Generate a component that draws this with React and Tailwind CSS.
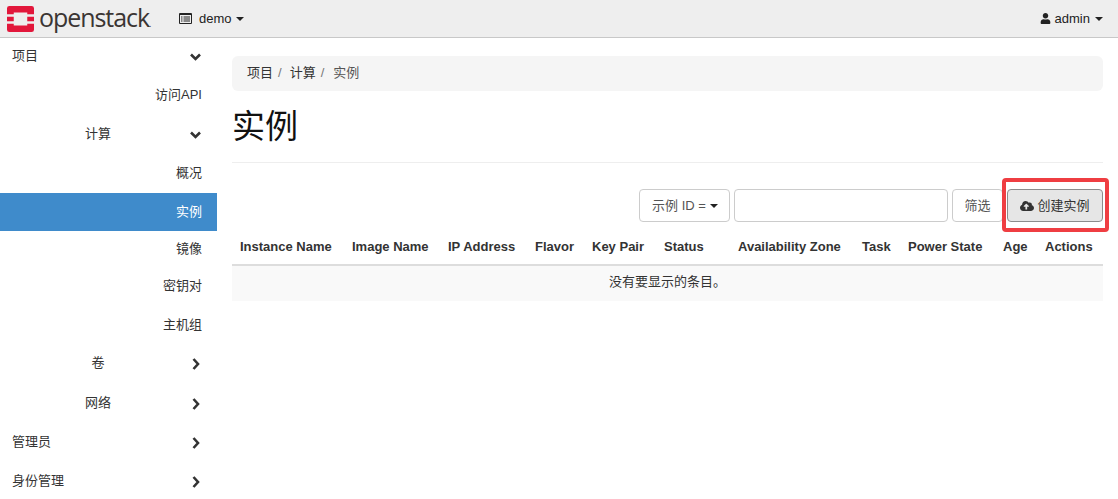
import React from "react";
import { FaCloudUploadAlt, FaUser } from "react-icons/fa";

const FONT = '"Liberation Sans", "Noto Sans CJK SC", sans-serif';

function Caret({ className = "" }) {
  return <span className={`inline-block w-0 h-0 border-x-4 border-x-transparent border-t-4 border-t-current ${className}`} />;
}

function Logo() {
  return (
    <svg width="27" height="26" viewBox="0 0 28 28" preserveAspectRatio="none" className="shrink-0">
      <path fill="#e2173b" fillRule="evenodd" d="M2.5 0H25.5A2.5 2.5 0 0 1 28 2.5V9H21V7H7V9H0V2.500A2.5 2.5 0 0 1 2.500 0ZM0 11.500H7V16.500H0ZM21 11.500H28V16.500H21ZM0 19H7V21H21V19H28V25.500A2.500 2.500 0 0 1 25.500 28H2.500A2.500 2.500 0 0 1 0 25.500Z" />
    </svg>
  );
}

function Chevron({ dir }) {
  return dir === "down" ? (
    <svg width="11" height="8" viewBox="0 0 11 8" className="mt-[2px]">
      <polyline points="1,1.500 5.500,6 10,1.500" fill="none" stroke="#333" strokeWidth="2.600" />
    </svg>
  ) : (
    <svg width="8" height="12" viewBox="0 0 8 12" className="mt-[2px]">
      <polyline points="1.500,1 6,6 1.500,11" fill="none" stroke="#333" strokeWidth="2.600" />
    </svg>
  );
}

function Row({ label, sub, icon, active, cls }) {
  return (
    <div className={`${cls} flex items-center pr-[15px] ${active ? "bg-[#3f8bcb] text-white" : "text-[#333]"}`}>
      {icon ? (
        <>
          <span className={`flex-1 ${sub ? "text-center pl-[6px]" : "pl-3"}`}>{label}</span>
          <span className="w-[13px] flex justify-center ml-[-1px]">
            <Chevron dir={icon} />
          </span>
        </>
      ) : (
        <span className="flex-1 text-right">{label}</span>
      )}
    </div>
  );
}

const cols = [
  ["Instance Name", "w-[112px]"],
  ["Image Name", "w-[96px]"],
  ["IP Address", "w-[87px]"],
  ["Flavor", "w-[57px]"],
  ["Key Pair", "w-[72px]"],
  ["Status", "w-[74px]"],
  ["Availability Zone", "w-[124px]"],
  ["Task", "w-[46px]"],
  ["Power State", "w-[95px]"],
  ["Age", "w-[42px]"],
  ["Actions", "w-[66px]"],
];

export default function App() {
  return (
    <div className="h-[499px] w-[1118px] overflow-hidden bg-white text-[13px] text-[#333] flex flex-col" style={{ fontFamily: FONT }}>
      <header className="h-[38px] shrink-0 bg-[#eeeeee] border-b border-[#c8c8c8] flex items-center">
        <div className="pl-[7px] flex items-center w-[179px]">
          <Logo />
          <span className="ml-[5px] text-[25px] leading-none tracking-[-1.05px] font-medium text-[#3b3533] pb-[2px]" style={{ fontFamily: '"Open Sans", sans-serif' }}>
            openstack<span className="text-[9px]">.</span>
          </span>
        </div>
        <div className="flex items-center text-[#222]">
          <svg width="13" height="11" viewBox="0 0 13 11" className="mr-[7px]">
            <path fill="#222" fillRule="evenodd" d="M1 0H12A1 1 0 0 1 13 1V10A1 1 0 0 1 12 11H1A1 1 0 0 1 0 10V1A1 1 0 0 1 1 0ZM1 2V10H12V2ZM2 3.500H3.500V4.500H2ZM4.500 3.500H11V4.500H4.500ZM2 5.500H3.500V6.500H2ZM4.500 5.500H11V6.500H4.500ZM2 7.500H3.500V8.500H2ZM4.500 7.500H11V8.500H4.500Z" />
          </svg>
          demo
          <Caret className="ml-[4px]" />
        </div>
        <div className="ml-auto pr-[15px] flex items-center text-[#222]">
          <FaUser size={11} className="mr-[4px]" />
          admin
          <Caret className="ml-[5px]" />
        </div>
      </header>
      <div className="flex flex-1 min-h-0">
        <aside className="w-[217px] shrink-0">
          <Row cls="h-[38px] pb-[3px]" label="项目" icon="down" />
          <Row cls="h-[39px] pb-[1px]" label="访问API" />
          <Row cls="h-[39px] pb-[1px]" label="计算" sub icon="down" />
          <Row cls="h-[39px] pb-[1px]" label="概况" />
          <Row cls="h-[38px] pb-[1px]" label="实例" active />
          <Row cls="h-[38px] pb-[3px]" label="镜像" />
          <Row cls="h-[38px] pb-[5px]" label="密钥对" />
          <Row cls="h-[39px] pb-[3px]" label="主机组" />
          <Row cls="h-[38px] pb-[5px]" label="卷" sub icon="right" />
          <Row cls="h-[39px] pb-[2px]" label="网络" sub icon="right" />
          <Row cls="h-[39px] pb-[2px]" label="管理员" icon="right" />
          <Row cls="h-[39px] pb-[2px]" label="身份管理" icon="right" />
        </aside>
        <main className="flex-1 pl-[15px] pr-[15px] pt-[18px] min-w-0">
          <nav className="h-[35px] bg-[#f5f5f5] rounded-md flex items-center px-[15px] pb-[2px]">
            <span>项目</span>
            <span className="text-[#777] px-[5px]">/</span>
            <span className="ml-[3px]">计算</span>
            <span className="text-[#777] px-[5px]">/</span>
            <span className="ml-[4px] text-[#555]">实例</span>
          </nav>
          <h1 className="mt-[18px] h-[53px] text-[33px] leading-[36px] text-[#111] font-normal">实例</h1>
          <hr className="border-t border-[#eeeeee]" />
          <div className="mt-[26px] flex justify-end items-center">
            <button className="h-[33px] w-[91px] pl-[1px] border border-[#ccc] rounded text-[#555] flex items-center justify-center">
              示例 ID =<Caret className="ml-[4px] text-[#222]" />
            </button>
            <input className="h-[33px] w-[214px] ml-[4px] border border-[#ccc] rounded bg-white" />
            <button className="h-[33px] w-[51px] ml-[4px] border border-[#ccc] rounded text-[#555]">筛选</button>
            <div className="relative ml-[4px]">
              <div className="absolute -top-[11px] -bottom-[10px] -left-[5px] -right-[6px] border-[4px] border-[#ef3e42] rounded-[4px]" />
              <button className="h-[33px] w-[96px] border border-[#8c8c8c] rounded bg-[#e6e6e6] text-[#333] flex items-center justify-center">
                <FaCloudUploadAlt size={14} className="mr-[3px]" />
                创建实例
              </button>
            </div>
          </div>
          <table className="mt-[8px] w-[871px] table-fixed border-collapse">
            <thead>
              <tr className="border-b-2 border-[#dddddd]">
                {cols.map(([c, w]) => (
                  <th key={c} className={`${w} h-[35px] px-2 text-left font-bold text-[#333] whitespace-nowrap`}>{c}</th>
                ))}
              </tr>
            </thead>
            <tbody>
              <tr className="bg-[#f9f9f9]">
                <td colSpan={11} className="h-[36px] pb-[3px] text-center text-[#333]">没有要显示的条目。</td>
              </tr>
            </tbody>
          </table>
        </main>
      </div>
    </div>
  );
}
